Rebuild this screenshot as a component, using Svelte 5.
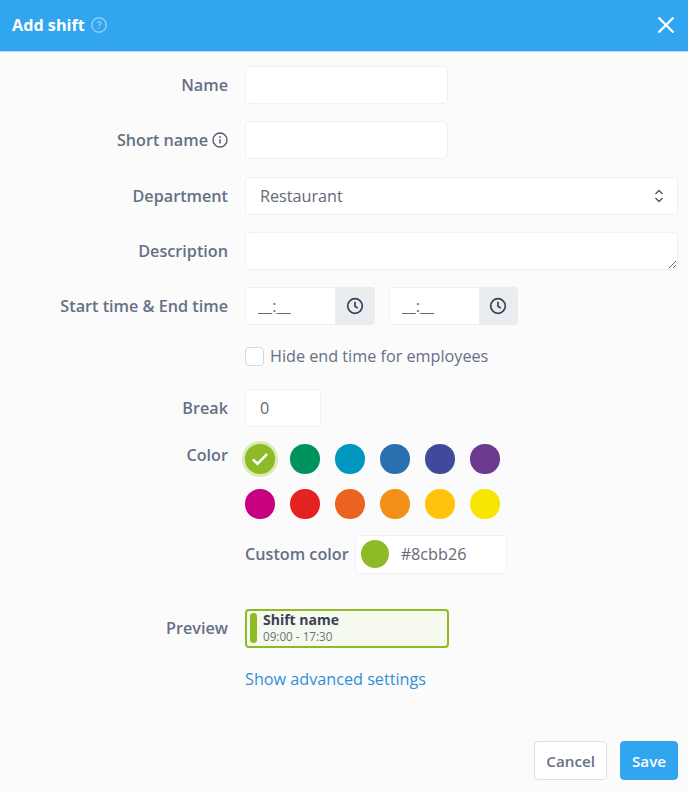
<script>
  let name = $state('');
  let shortName = $state('');
  let department = $state('Restaurant');
  let description = $state('');
  let hideEnd = $state(false);
  let breakMinutes = $state('0');
  let color = $state('#8cbb26');

  const swatches = [
    '#8cbb26', '#00935d', '#0096bd', '#2a70ae', '#41499a', '#6c3a8e',
    '#c6007e', '#e42320', '#ec6321', '#f39019', '#ffc30b', '#f6e500'
  ];
</script>

<div class="modal">
  <header class="modal-header">
    <div class="title">
      <h2>Add shift</h2>
      <svg class="help" viewBox="0 0 16 16" width="16" height="16" aria-hidden="true">
        <circle cx="8" cy="8" r="7.2" fill="none" stroke="currentColor" stroke-width="1.2" />
        <path d="M6.3 6.3a1.7 1.7 0 1 1 2.6 1.5c-.6.4-.9.7-.9 1.3" fill="none" stroke="currentColor" stroke-width="1.1" />
        <circle cx="8" cy="11.2" r=".7" fill="currentColor" />
      </svg>
    </div>
    <button class="close" aria-label="Close">
      <svg viewBox="0 0 18 18" width="18" height="18">
        <path d="M1.5 1.5l15 15M16.500 1.500l-15 15" stroke="#fff" stroke-width="2.300" fill="none" />
      </svg>
    </button>
  </header>

  <form class="form" onsubmit={(e) => e.preventDefault()}>
    <div class="row">
      <label class="label" for="name">Name</label>
      <input id="name" class="input short" bind:value={name} />
    </div>

    <div class="row">
      <label class="label" for="short">
        Short name
        <svg class="info" viewBox="0 0 16 16" width="16" height="16" aria-hidden="true">
          <circle cx="8" cy="8" r="7" fill="none" stroke="currentColor" stroke-width="1.4" />
          <circle cx="8" cy="4.900" r=".9" fill="currentColor" />
          <path d="M8 7.200v4.300" stroke="currentColor" stroke-width="1.500" />
        </svg>
      </label>
      <input id="short" class="input short" bind:value={shortName} />
    </div>

    <div class="row">
      <label class="label" for="department">Department</label>
      <div class="select-wrap">
        <select id="department" class="input select" bind:value={department}>
          <option>Restaurant</option>
        </select>
        <svg class="chevrons" viewBox="0 0 10 16" width="10" height="16" aria-hidden="true">
          <path d="M1.500 6l3.500-3.500L8.500 6M1.500 10l3.500 3.500L8.500 10" fill="none" stroke="#4a5266" stroke-width="1.300" />
        </svg>
      </div>
    </div>

    <div class="row">
      <label class="label" for="description">Description</label>
      <textarea id="description" class="input area" bind:value={description}></textarea>
    </div>

    <div class="row">
      <span class="label">Start time &amp; End time</span>
      <div class="times">
        {#each ['start', 'end'] as t}
          <div class="time">
            <input class="time-input" placeholder="__:__" aria-label={t} />
            <span class="time-addon">
              <svg viewBox="0 0 18 18" width="18" height="18" aria-hidden="true">
                <circle cx="9" cy="9" r="7.300" fill="none" stroke="#39425a" stroke-width="1.700" />
                <path d="M9 4.800V9.300l2.800 1.800" fill="none" stroke="#39425a" stroke-width="1.700" />
              </svg>
            </span>
          </div>
        {/each}
      </div>
    </div>

    <div class="row check-row">
      <label class="check">
        <input type="checkbox" bind:checked={hideEnd} />
        <span class="box"></span>
        Hide end time for employees
      </label>
    </div>

    <div class="row break-row">
      <label class="label" for="break">Break</label>
      <input id="break" class="input tiny" bind:value={breakMinutes} />
    </div>

    <div class="row color-row">
      <span class="label color-label">Color</span>
      <div class="color-body">
        <div class="swatches">
          {#each swatches as s}
            <button
              type="button"
              class="swatch"
              class:active={color === s}
              style="background: {s}"
              aria-label={s}
              onclick={() => (color = s)}
            >
              {#if color === s}
                <svg viewBox="0 0 18 14" width="18" height="14" aria-hidden="true">
                  <path d="M2 7.500l4.500 4.300L16 2.200" fill="none" stroke="#fff" stroke-width="2.600" />
                </svg>
              {/if}
            </button>
          {/each}
        </div>
        <div class="custom">
          <span class="custom-label">Custom color</span>
          <div class="custom-field">
            <span class="custom-dot" style="background: {color}"></span>
            <span class="custom-value">{color}</span>
          </div>
        </div>
      </div>
    </div>

    <div class="row preview-row">
      <span class="label">Preview</span>
      <div class="preview">
        <span class="preview-bar"></span>
        <div class="preview-text">
          <strong>Shift name</strong>
          <span>09:00 - 17:30</span>
        </div>
      </div>
    </div>

    <div class="row link-row">
      <a class="advanced" href="#advanced">Show advanced settings</a>
    </div>
  </form>

  <footer class="footer">
    <button class="btn cancel">Cancel</button>
    <button class="btn save">Save</button>
  </footer>
</div>

<style>
  :global(body) {
    margin: 0;
    background: #fbfbfc;
  }

  .modal {
    display: flex;
    flex-direction: column;
    height: 791px;
    background: #fbfbfc;
    font-family: 'Open Sans', 'Noto Sans', sans-serif;
    font-size: 16.2px;
    color: #667085;
    overflow: hidden;
  }

  .modal-header {
    box-sizing: border-box;
    display: flex;
    align-items: center;
    justify-content: space-between;
    height: 52px;
    padding: 0 13px 2px 12px;
    background: #32a5f1;
    border-bottom: 1px solid #b5def9;
    flex-shrink: 0;
  }

  .title {
    display: flex;
    align-items: center;
    gap: 6px;
  }

  h2 {
    margin: 0;
    font-size: 16.200px;
    font-weight: 700;
    color: #fff;
  }

  .help {
    color: rgba(255, 255, 255, 0.55);
  }

  .close {
    display: flex;
    padding: 0;
    background: none;
    border: none;
  }

  .form {
    display: flex;
    flex-direction: column;
    gap: 17.300px;
    padding: 14px 10px 0 0;
  }

  .row {
    display: flex;
    align-items: center;
    gap: 17px;
  }

  .label {
    display: flex;
    align-items: center;
    justify-content: flex-end;
    gap: 4px;
    width: 228px;
    flex-shrink: 0;
    font-weight: 600;
    color: #667085;
    white-space: nowrap;
  }

  .info {
    color: #525b73;
  }

  .input {
    box-sizing: border-box;
    height: 38px;
    padding: 0 14px;
    background: #fff;
    border: 1px solid #f0f1f4;
    border-radius: 4px;
    font: inherit;
    color: #646a76;
    outline: none;
  }

  .short {
    width: 202.500px;
  }

  .tiny {
    width: 76px;
  }

  .select-wrap {
    position: relative;
    flex: 1;
    display: flex;
  }

  .select {
    flex: 1;
    appearance: none;
  }

  .chevrons {
    position: absolute;
    right: 14px;
    top: 11px;
  }

  .area {
    flex: 1;
    padding-top: 8px;
    resize: vertical;
    display: block;
  }

  .times {
    display: flex;
    gap: 14px;
  }

  .time {
    display: flex;
    height: 38px;
  }

  .time-input {
    box-sizing: border-box;
    width: 90px;
    padding: 0 12px;
    background: #fff;
    border: 1px solid #f0f1f4;
    border-right: none;
    border-radius: 4px 0 0 4px;
    font: inherit;
    outline: none;
  }

  .time-input::placeholder {
    color: #646a76;
    opacity: 1;
  }

  .time-addon {
    display: flex;
    align-items: center;
    justify-content: center;
    width: 39.500px;
    background: #ebecf0;
    border-radius: 0 4px 4px 0;
  }

  .check-row {
    margin: 3px 0 4px 245px;
  }

  .check {
    position: relative;
    display: flex;
    align-items: center;
    gap: 6px;
    color: #667085;
  }

  .check input {
    position: absolute;
    opacity: 0;
    margin: 0;
  }

  .box {
    box-sizing: border-box;
    width: 19px;
    height: 19px;
    background: #fff;
    border: 1px solid #d5d8e0;
    border-radius: 4px;
  }

  .color-row {
    align-items: flex-start;
  }

  .swatches {
    display: grid;
    grid-template-columns: repeat(6, 29.500px);
    column-gap: 15.500px;
    row-gap: 15.500px;
  }

  .swatch {
    display: flex;
    align-items: center;
    justify-content: center;
    width: 29.500px;
    height: 29.500px;
    padding: 0;
    border: none;
    border-radius: 50%;
  }

  .swatch.active {
    box-shadow: 0 0 0 3px #d8ecb4;
  }

  .custom {
    display: flex;
    align-items: center;
    gap: 6px;
    margin-top: 16px;
  }

  .custom-label {
    font-weight: 600;
    white-space: nowrap;
  }

  .custom-field {
    box-sizing: border-box;
    display: flex;
    align-items: center;
    gap: 12px;
    width: 152px;
    height: 39px;
    padding: 0 5px;
    background: #fff;
    border: 1px solid #f0f1f4;
    border-radius: 4px;
    color: #646a76;
  }

  .custom-dot {
    width: 28px;
    height: 28px;
    border-radius: 50%;
  }

  .preview-row {
    margin-top: 18px;
  }

  .preview {
    box-sizing: border-box;
    display: flex;
    align-items: center;
    gap: 6px;
    width: 204px;
    height: 39px;
    padding: 0 3px;
    background: #f6f9ee;
    border: 2px solid #8cbb26;
    border-radius: 4px;
  }

  .preview-bar {
    width: 7px;
    height: 30px;
    background: #8cbb26;
    border-radius: 3.500px;
    flex-shrink: 0;
  }

  .preview-text {
    display: flex;
    flex-direction: column;
    line-height: 16px;
    font-size: 11.700px;
    color: #6b7280;
  }

  .preview-text strong {
    font-size: 14px;
    font-weight: 700;
    color: #3a4154;
  }

  .link-row {
    margin: 3px 0 0 245px;
  }

  .advanced {
    color: #2f8fd8;
    text-decoration: none;
  }

  .footer {
    display: flex;
    justify-content: flex-end;
    gap: 13px;
    margin-top: auto;
    padding: 0 10px 11px;
  }

  .btn {
    box-sizing: border-box;
    height: 39px;
    padding: 0 11px;
    border-radius: 4px;
    font: inherit;
    font-size: 15.200px;
    font-weight: 600;
  }

  .cancel {
    background: #fff;
    border: 1px solid #dcdfe6;
    color: #667085;
  }

  .save {
    background: #32a5f1;
    border: 1px solid #32a5f1;
    color: #fff;
  }
</style>
